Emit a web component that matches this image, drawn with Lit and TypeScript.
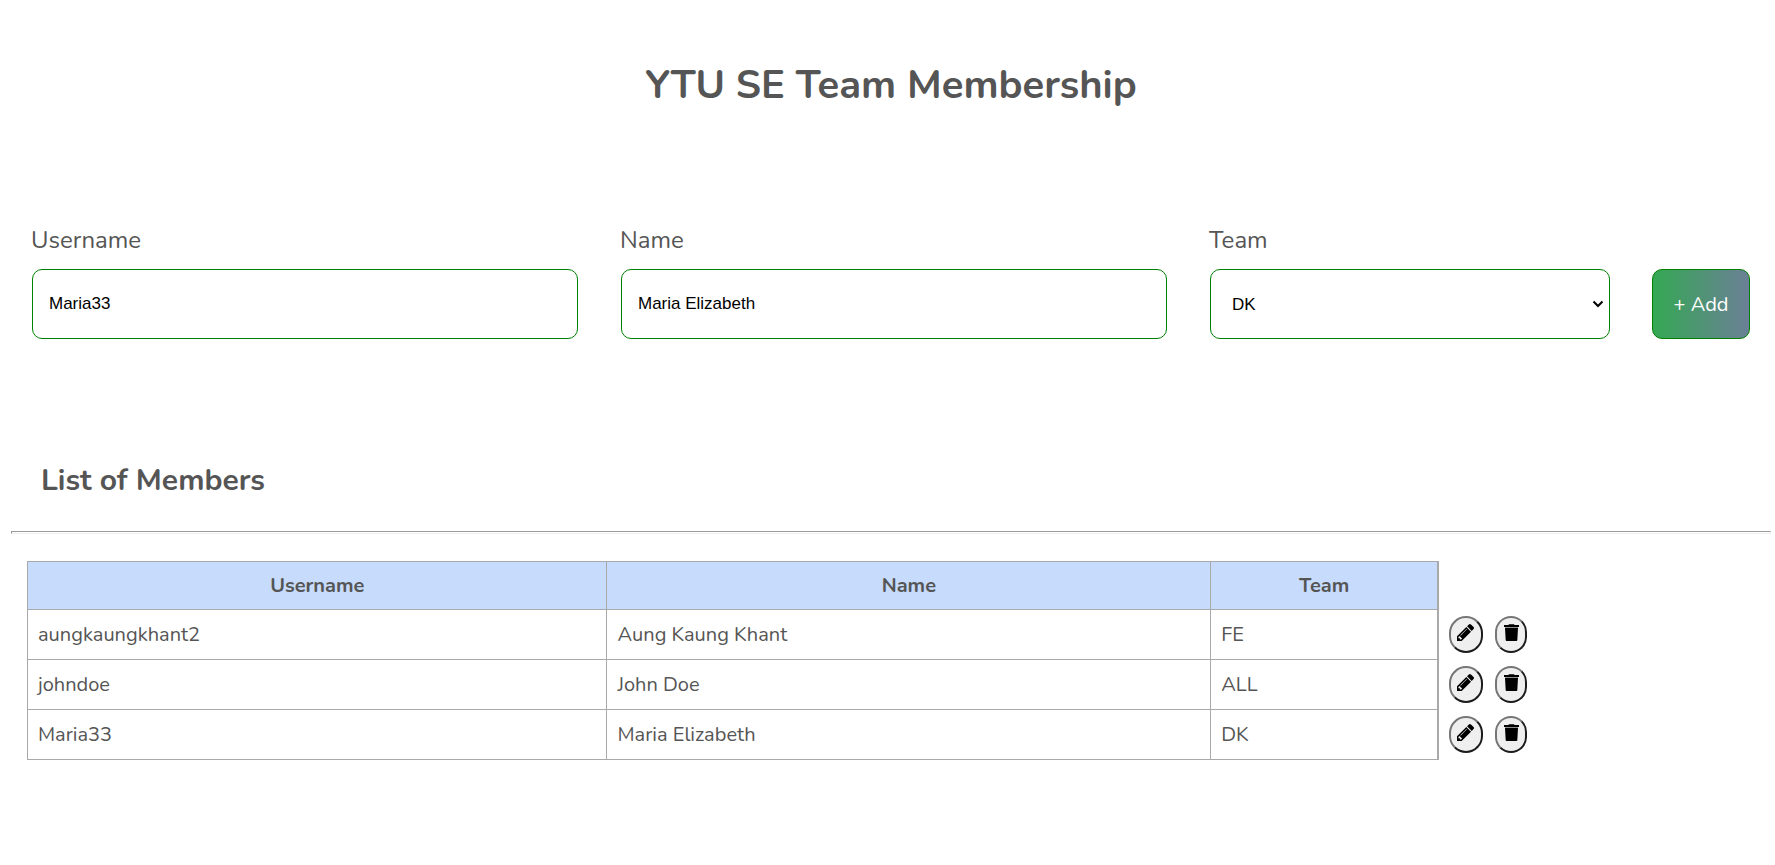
import { LitElement, html, css, svg } from "lit";
import { customElement, state } from "lit/decorators.js";

interface Member {
  username: string;
  name: string;
  team: string;
}

const pencilIcon = svg`<path d="M363 1536l91-91-235-235-91 91v107h128v128h107zM886 608q0-22-22-22-10 0-17 7l-542 542q-7 7-7 17 0 22 22 22 10 0 17-7l542-542q7-7 7-17zM832 416l416 416-832 832h-416v-416zM1515 512q0 53-37 90l-166 166-416-416 166-165q36-38 90-38 53 0 91 38l235 234q37 39 37 91z"/>`;
const trashIcon = svg`<path d="M5 0.2h5l.6.8H15v2H0V1h4.400zM1 4h13l-.7 12.200q-.1.8-.9.8H2.600q-.8 0-.9-.8z"/><path d="M1 3h13v1H1z" fill-opacity="0.4"/>`;

@customElement("app-root")
export class AppRoot extends LitElement {
  static styles = css`
    :host {
      display: block;
      padding: 58px 4px 40px 11px;
      font-family: Nunito, "Open Sans", sans-serif;
      font-size: 20px;
      color: #555;
      background: #fff;
    }
    * {
      box-sizing: border-box;
    }
    .title {
      margin: 0;
      font-size: 40px;
      line-height: 55px;
      font-weight: 700;
      text-align: center;
    }
    .form {
      display: grid;
      grid-template-columns: minmax(0, 550fr) minmax(0, 550fr) minmax(0, 404fr) 98px;
      column-gap: 39px;
      align-items: end;
      margin: 111px 21px 0 20px;
    }
    .field {
      display: flex;
      flex-direction: column;
      gap: 12px;
    }
    .label {
      font-size: 24px;
      line-height: 33px;
    }
    .control {
      height: 70px;
      margin: 0 3px 0 1px;
      padding: 16px;
      border: 1px solid green;
      border-radius: 10px;
      background: #fff;
      color: #000;
      font-family: "Liberation Sans", Arial, sans-serif;
      font-size: 17px;
    }
    .select {
      appearance: none;
      padding: 16px 24px 16px 21px;
      background: #fff
        url("data:image/svg+xml,%3Csvg xmlns='http://www.w3.org/2000/svg' width='12' height='8' viewBox='0 0 12 8'%3E%3Cpath d='M1.500 1.500L6 6l4.500-4.500' fill='none' stroke='black' stroke-width='2'/%3E%3C/svg%3E")
        no-repeat right 5px center;
    }
    .add {
      height: 70px;
      padding: 0;
      border: 1px solid green;
      border-radius: 10px;
      background: linear-gradient(to right, #34a853, #6b7f96);
      color: #fff;
      font-family: inherit;
      font-size: 20px;
    }
    .subtitle {
      margin: 121px 0 30px 30px;
      font-size: 30px;
      line-height: 41px;
      font-weight: 700;
    }
    .rule {
      height: 3px;
      margin: 0;
      border: 1px solid;
      border-color: #9a9a9a #eee #eee #9a9a9a;
    }
    .list {
      margin: 27px 8px 0 16px;
    }
    .members {
      width: 100%;
      border-collapse: collapse;
      table-layout: fixed;
    }
    .wide-user {
      width: 33.4%;
    }
    .wide-name {
      width: 34.8%;
    }
    .wide-team {
      width: 13.1%;
    }
    .head {
      height: 48px;
      padding: 0 10px;
      border: 1px solid #a9a9a9;
      background: #c7dbfc;
      font-weight: 700;
      text-align: center;
    }
    .cell {
      height: 50px;
      padding: 0 10px;
      border: 1px solid #a9a9a9;
    }
    .last {
      border-right-width: 2px;
    }
    .tools {
      padding: 0 10px;
    }
    .buttons {
      display: flex;
      gap: 12px;
    }
    .tool {
      display: block;
      border: 2px solid;
      border-color: #767676 #1c1c1c #1c1c1c #767676;
      border-radius: 20px;
      background: #efefef;
      color: #000;
    }
    .edit {
      padding: 6px 7px 10px 6px;
    }
    .delete {
      padding: 6px 6px 10px 7px;
    }
    .icon {
      display: block;
      height: 17px;
      fill: currentColor;
    }
    .edit .icon {
      width: 17px;
    }
    .delete .icon {
      width: 15px;
    }
  `;

  @state() private members: Member[] = [
    { username: "aungkaungkhant2", name: "Aung Kaung Khant", team: "FE" },
    { username: "johndoe", name: "John Doe", team: "ALL" },
    { username: "Maria33", name: "Maria Elizabeth", team: "DK" },
  ];

  private add(e: Event) {
    e.preventDefault();
    const data = new FormData(e.target as HTMLFormElement);
    this.members = [
      ...this.members,
      {
        username: String(data.get("username")),
        name: String(data.get("name")),
        team: String(data.get("team")),
      },
    ];
  }

  private remove(member: Member) {
    this.members = this.members.filter((m) => m !== member);
  }

  private row(m: Member) {
    return html`<tr>
      <td class="cell">${m.username}</td>
      <td class="cell">${m.name}</td>
      <td class="cell last">${m.team}</td>
      <td class="tools">
        <div class="buttons">
          <button class="tool edit" type="button" aria-label="Edit">
            <svg class="icon" viewBox="0 149 1515 1515" aria-hidden="true">${pencilIcon}</svg>
          </button>
          <button class="tool delete" type="button" aria-label="Delete" @click=${() => this.remove(m)}>
            <svg class="icon" viewBox="0 0 15 17" aria-hidden="true">${trashIcon}</svg>
          </button>
        </div>
      </td>
    </tr>`;
  }

  render() {
    return html`
      <h1 class="title">YTU SE Team Membership</h1>
      <form class="form" @submit=${this.add}>
        <div class="field">
          <label class="label" for="username">Username</label>
          <input class="control" id="username" name="username" type="text" value="Maria33" />
        </div>
        <div class="field">
          <label class="label" for="name">Name</label>
          <input class="control" id="name" name="name" type="text" value="Maria Elizabeth" />
        </div>
        <div class="field">
          <label class="label" for="team">Team</label>
          <select class="control select" id="team" name="team">
            <option selected>DK</option>
            <option>FE</option>
            <option>ALL</option>
          </select>
        </div>
        <button class="add" type="submit">+ Add</button>
      </form>
      <h2 class="subtitle">List of Members</h2>
      <hr class="rule" />
      <div class="list">
        <table class="members">
          <colgroup>
            <col class="wide-user" />
            <col class="wide-name" />
            <col class="wide-team" />
            <col />
          </colgroup>
          <thead>
            <tr>
              <th class="head" scope="col">Username</th>
              <th class="head" scope="col">Name</th>
              <th class="head last" scope="col">Team</th>
            </tr>
          </thead>
          <tbody>
            ${this.members.map((m) => this.row(m))}
          </tbody>
        </table>
      </div>
    `;
  }
}
